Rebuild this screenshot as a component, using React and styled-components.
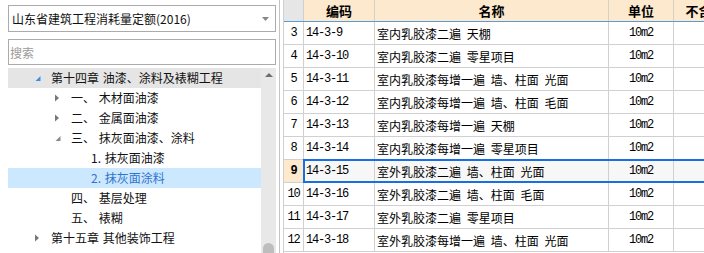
import React from 'react';
import styled, { createGlobalStyle } from 'styled-components';

const treeItems = [
  { level: 1, label: '第十四章 油漆、涂料及裱糊工程', toggle: 'open', active: true, hover: true },
  { level: 2, label: '一、 木材面油漆', toggle: 'closed' },
  { level: 2, label: '二、 金属面油漆', toggle: 'closed' },
  { level: 2, label: '三、 抹灰面油漆、涂料', toggle: 'open' },
  { level: 3, label: '1. 抹灰面油漆' },
  { level: 3, label: '2. 抹灰面涂料', selected: true },
  { level: 2, label: '四、 基层处理' },
  { level: 2, label: '五、 裱糊' },
  { level: 1, label: '第十五章 其他装饰工程', toggle: 'closed' },
];

const rows = [
  { no: 3, code: '14-3-9', name: '室内乳胶漆二遍 天棚' },
  { no: 4, code: '14-3-10', name: '室内乳胶漆二遍 零星项目' },
  { no: 5, code: '14-3-11', name: '室内乳胶漆每增一遍 墙、柱面 光面' },
  { no: 6, code: '14-3-12', name: '室内乳胶漆每增一遍 墙、柱面 毛面' },
  { no: 7, code: '14-3-13', name: '室内乳胶漆每增一遍 天棚' },
  { no: 8, code: '14-3-14', name: '室内乳胶漆每增一遍 零星项目' },
  { no: 9, code: '14-3-15', name: '室外乳胶漆二遍 墙、柱面 光面', selected: true },
  { no: 10, code: '14-3-16', name: '室外乳胶漆二遍 墙、柱面 毛面' },
  { no: 11, code: '14-3-17', name: '室外乳胶漆二遍 零星项目' },
  { no: 12, code: '14-3-18', name: '室外乳胶漆每增一遍 墙、柱面 光面' },
];

const Toggle = ({ type, active }) => {
  if (!type) return <ToggleBox />;
  return (
    <ToggleBox>
      {type === 'open' ? (
        <svg width="16" height="20" viewBox="0 0 16 20">
          <polygon points="8.5,8 8.5,13 3.5,13" fill={active ? '#3d8ee6' : '#8a8a8a'} />
        </svg>
      ) : (
        <svg width="16" height="20" viewBox="0 0 16 20">
          <polygon points="3,6.5 7,10 3,13.5" fill="#777" />
        </svg>
      )}
    </ToggleBox>
  );
};

const App = () => {
  return (
    <Page>
      <GlobalStyle />
      <LeftPanel>
        <Select>
          <span>山东省建筑工程消耗量定额(2016)</span>
          <svg width="7" height="4" viewBox="0 0 7 4">
            <polygon points="0,0 7,0 3.5,4" fill="#888" />
          </svg>
        </Select>
        <Search placeholder="搜索" />
        <Tree>
          <TreeList>
            {treeItems.map((item) => (
              <TreeRow
                key={item.label}
                $level={item.level}
                $selected={item.selected}
                $hover={item.hover}
              >
                <Toggle type={item.toggle} active={item.active} />
                <TreeLabel>{item.label}</TreeLabel>
              </TreeRow>
            ))}
          </TreeList>
          <ScrollBar>
            <ScrollArrow>
              <svg width="8" height="4" viewBox="0 0 8 4">
                <polygon points="0,4 8,4 4,0" fill="#6d6d6d" />
              </svg>
            </ScrollArrow>
            <ScrollThumb />
          </ScrollBar>
        </Tree>
      </LeftPanel>
      <Splitter />
      <Grid>
        <HeaderRow>
          <Corner />
          <HeadCell $w={71}>编码</HeadCell>
          <HeadCell $w={234}>名称</HeadCell>
          <HeadCell $w={65}>单位</HeadCell>
          <HeadCell $w={76}>不含税价</HeadCell>
        </HeaderRow>
        {rows.map((r) => (
          <Row key={r.no}>
            <RowNo $selected={r.selected}>{r.no}</RowNo>
            <RowBody $selected={r.selected}>
              <CodeCell>{r.code}</CodeCell>
              <NameCell>{r.name}</NameCell>
              <UnitCell>10m2</UnitCell>
              <EmptyCell />
            </RowBody>
          </Row>
        ))}
      </Grid>
    </Page>
  );
};

const GlobalStyle = createGlobalStyle`
  html, body {
    margin: 0;
    padding: 0;
    background: #fff;
  }
  body {
    font-family: "Noto Sans CJK SC", "Liberation Sans", sans-serif;
    font-size: 12px;
    color: #000;
  }
`;

const Page = styled.div`
  display: flex;
  width: 704px;
  height: 253px;
  overflow: hidden;
  background: #fff;
`;

const LeftPanel = styled.div`
  width: 268px;
  flex-shrink: 0;
  padding: 5px 1px 0 8px;
  display: flex;
  flex-direction: column;
`;

const Select = styled.div`
  height: 25px;
  border: 1px solid #ababab;
  display: flex;
  align-items: center;
  justify-content: space-between;
  padding: 0 6px 0 3px;
  font-size: 12px;
  color: #111;
`;

const Search = styled.input`
  margin-top: 7px;
  box-sizing: border-box;
  height: 26px;
  border: 1px solid #ababab;
  padding: 0 1px;
  font-family: "Noto Sans CJK SC", sans-serif;
  font-size: 12px;
  outline: none;

  &::placeholder {
    color: #9a9a9a;
  }
`;

const Tree = styled.div`
  margin-top: 3px;
  flex: 1;
  display: flex;
  min-height: 0;
`;

const TreeList = styled.div`
  flex: 1;
  display: flex;
  flex-direction: column;
`;

const TreeRow = styled.div`
  height: 20px;
  display: flex;
  align-items: center;
  padding-left: ${(p) => 24 + (p.$level - 1) * 20}px;
  background: ${(p) => (p.$selected ? '#cce8ff' : p.$hover ? '#e5e5e5' : 'transparent')};
  color: ${(p) => (p.$selected ? '#2f74d0' : '#111')};
`;

const ToggleBox = styled.span`
  width: 19px;
  height: 20px;
  flex-shrink: 0;
  display: flex;
  align-items: center;
`;

const TreeLabel = styled.span`
  white-space: pre;
  line-height: 20px;
  word-spacing: 1px;
`;

const ScrollBar = styled.div`
  width: 15px;
  background: #e8e8e8;
  display: flex;
  flex-direction: column;
  align-items: center;
`;

const ScrollArrow = styled.div`
  height: 12px;
  display: flex;
  align-items: center;
  padding-top: 1px;
`;

const ScrollThumb = styled.div`
  margin-top: auto;
  margin-bottom: -20px;
  width: 11px;
  height: 30px;
  border-radius: 6px;
  background: #bdbdbd;
`;

const Splitter = styled.div`
  width: 1px;
  flex-shrink: 0;
  margin: 0 3px 0 2px;
  background: #c4c4c4;
`;

const Grid = styled.div`
  flex: 1;
  display: flex;
  flex-direction: column;
  border-left: 1px solid #d0d0d0;
  min-width: 0;
`;

const HeaderRow = styled.div`
  display: flex;
  height: 21px;
  border-bottom: 1px solid #5b9bd5;
  background: #fde9cd;
`;

const Corner = styled.div`
  width: 19px;
  flex-shrink: 0;
  background: #e6e6e6;
  border-right: 1px solid #d0d0d0;
`;

const HeadCell = styled.div`
  width: ${(p) => p.$w - 1}px;
  flex-shrink: 0;
  border-right: 1px solid #d6d0c6;
  display: flex;
  align-items: center;
  justify-content: center;
  font-size: 13px;
  font-weight: bold;
  white-space: nowrap;
  overflow: hidden;
`;

const Row = styled.div`
  display: flex;
  height: 22px;
  border-bottom: 1px solid #d0d0d0;
  flex-shrink: 0;
`;

const mono = `
  font-family: "Liberation Mono", monospace;
  font-size: 12px;
  letter-spacing: -1.2px;
`;

const RowNo = styled.div`
  width: 19px;
  flex-shrink: 0;
  border-right: 1px solid #d0d0d0;
  display: flex;
  align-items: center;
  justify-content: center;
  ${mono}
  font-weight: ${(p) => (p.$selected ? 'bold' : 'normal')};
  background: ${(p) => (p.$selected ? '#fde9cd' : '#fff')};
`;

const RowBody = styled.div`
  position: relative;
  flex: 1;
  display: flex;
  background: ${(p) => (p.$selected ? '#f7f7f7' : '#fff')};

  &::after {
    content: '';
    display: ${(p) => (p.$selected ? 'block' : 'none')};
    position: absolute;
    top: -1px;
    bottom: -1px;
    left: -1px;
    right: -3px;
    border: 2px solid #1a6fe0;
    pointer-events: none;
  }
`;

const Cell = styled.div`
  flex-shrink: 0;
  display: flex;
  align-items: center;
  border-right: 1px solid #d0d0d0;
  white-space: pre;
  overflow: hidden;
`;

const CodeCell = styled(Cell)`
  width: 68px;
  padding-left: 2px;
  ${mono}
`;

const NameCell = styled(Cell)`
  width: 231px;
  padding-left: 2px;
  font-size: 12px;
  word-spacing: 3px;
`;

const UnitCell = styled(Cell)`
  width: 64px;
  justify-content: center;
  ${mono}
`;

const EmptyCell = styled(Cell)`
  width: 75px;
`;

export default App;
